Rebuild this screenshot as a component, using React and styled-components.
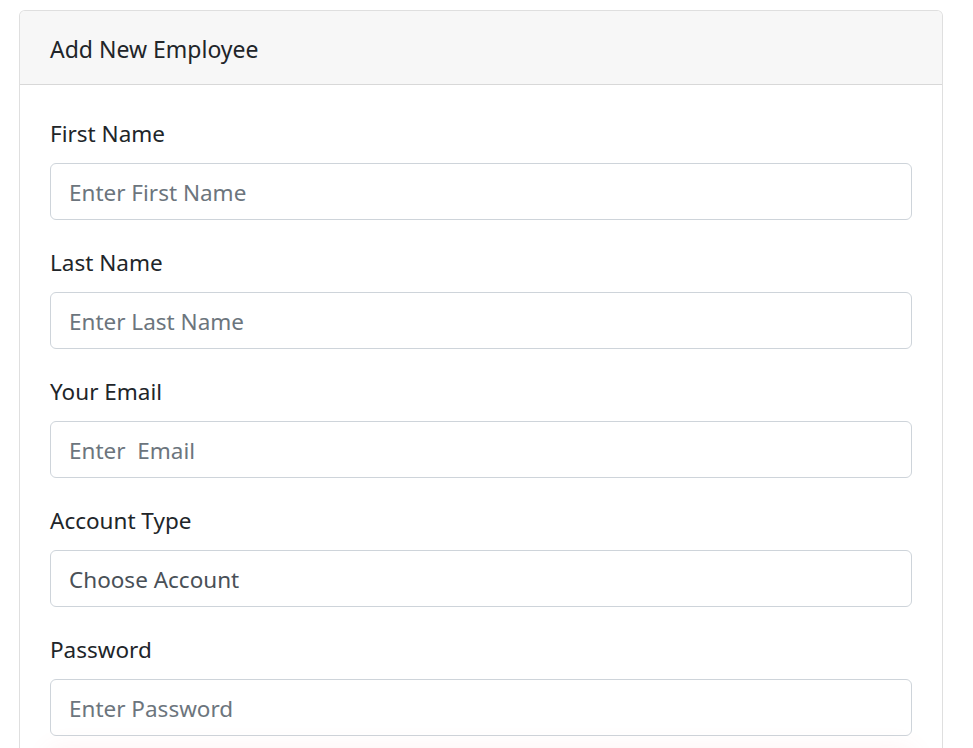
import React from "react";
import styled, { createGlobalStyle } from "styled-components";

const Global = createGlobalStyle`
  html, body { margin: 0; padding: 0; background: #fff; }
  body {
    font-family: "Noto Sans", "Open Sans", sans-serif;
    font-size: 22.5px;
    line-height: 1.5;
    color: #212529;
  }
  * { box-sizing: border-box; }
`;

const Page = styled.div`
  padding: 10px 30px 0 19px;
  height: 748px;
  overflow: hidden;
`;

const Card = styled.div`
  border: 1px solid rgba(0, 0, 0, 0.125);
  border-radius: 6px;
  background: #fff;
`;

const CardHeader = styled.div`
  padding: 20px 30px 17px;
  background: #f7f7f7;
  border-bottom: 1px solid rgba(0, 0, 0, 0.125);
  border-radius: 5px 5px 0 0;
  font-size: 23px;
  line-height: 36px;
`;

const CardBody = styled.form`
  padding: 30px;
`;

const Group = styled.div`
  margin-bottom: 24px;
`;

const Label = styled.label`
  display: block;
  padding-top: 1px;
  margin-bottom: 11px;
  line-height: 36px;
`;

const fieldStyles = `
  display: block;
  width: 100%;
  height: 57px;
  padding: 10px 18px 8px;
  font: inherit;
  color: #495057;
  background: #fff;
  border: 1px solid #ced4da;
  border-radius: 6px;
  outline: none;
`;

const Input = styled.input`
  ${fieldStyles}
  &::placeholder { color: #6c757d; opacity: 1; }
`;

const Select = styled.select`
  ${fieldStyles}
  appearance: none;
`;

const SubmitButton = styled.button`
  display: block;
  width: 100%;
  height: 57px;
  border: none;
  border-radius: 6px;
  background: transparent;
  box-shadow: 0 -10px 26px rgba(255, 110, 110, 0.1);
`;

const fields = [
  { label: "First Name", placeholder: "Enter First Name", type: "text" },
  { label: "Last Name", placeholder: "Enter Last Name", type: "text" },
  { label: "Your Email", placeholder: "Enter\u00a0 Email", type: "email" },
];

export default function App() {
  return (
    <>
      <Global />
      <Page>
        <Card>
          <CardHeader>Add New Employee</CardHeader>
          <CardBody>
            {fields.map((f) => (
              <Group key={f.label}>
                <Label>{f.label}</Label>
                <Input type={f.type} placeholder={f.placeholder} />
              </Group>
            ))}
            <Group>
              <Label>Account Type</Label>
              <Select defaultValue="">
                <option value="">Choose Account</option>
                <option value="admin">Admin</option>
                <option value="user">User</option>
              </Select>
            </Group>
            <Group>
              <Label>Password</Label>
              <Input type="password" placeholder="Enter Password" />
            </Group>
            <SubmitButton type="button" aria-label="Submit" />
          </CardBody>
        </Card>
      </Page>
    </>
  );
}
